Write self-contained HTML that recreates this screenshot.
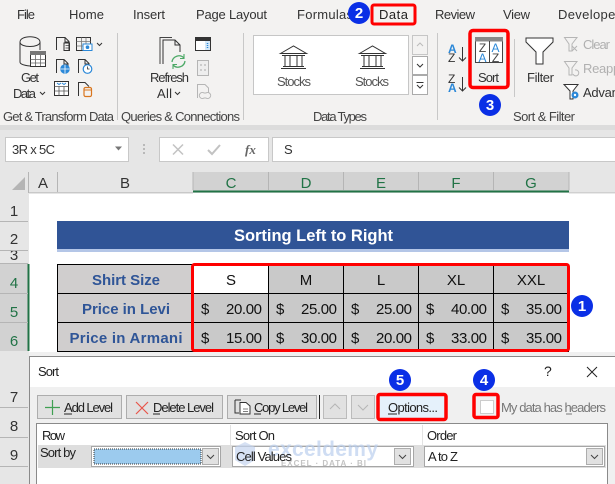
<!DOCTYPE html>
<html><head><meta charset="utf-8"><style>
html,body{margin:0;padding:0;background:#fff;width:615px;height:484px;overflow:hidden}
svg{display:block}
text{font-family:"Liberation Sans",sans-serif;fill:#333;font-size:13px}
.h{font-size:15px;fill:#333;text-anchor:middle}
.b{font-size:15px;font-weight:bold;fill:#2f5597;text-anchor:middle}
.c{font-size:15px;fill:#111}
.cm{font-size:15px;fill:#111;text-anchor:middle}
.d{font-size:13px;fill:#222}
.n{font-weight:bold;font-size:15px;fill:#fff;text-anchor:middle}
.l{fill:none;stroke:#333;stroke-width:1}
</style></head><body>
<svg width="615" height="484" viewBox="0 0 615 484" xmlns="http://www.w3.org/2000/svg">
<!-- ribbon -->
<rect width="615" height="126" fill="#f3f2f1"/>
<rect y="125" width="615" height="5" fill="#dcdcdc"/>
<rect y="130" width="615" height="63" fill="#e6e6e6"/>
<text x="17" y="19" textLength="18">File</text>
<text x="69" y="19" textLength="35">Home</text>
<text x="133" y="19" textLength="32">Insert</text>
<text x="196" y="19" textLength="71">Page Layout</text>
<text x="297" y="19" textLength="56">Formulas</text>
<text x="379" y="19" textLength="29" style="fill:#222">Data</text>
<text x="435" y="19" textLength="40">Review</text>
<text x="503" y="19" textLength="27">View</text>
<text x="558" y="19" textLength="62">Developer</text>
<rect x="372" y="5" width="43" height="19" rx="2" fill="none" stroke="#f00" stroke-width="3"/>
<path d="M117.500 33V120M243.500 33V120M437.500 33V120M514.500 39V97" stroke="#c8c8c8"/>

<!-- get data icons -->
<path d="M20 42V62Q20 65 30 66M40 50V42M20 42C20 35 40 35 40 42C40 48 20 48 20 42Z" class="l" fill="#fff"/>
<rect x="30.500" y="51.500" width="15" height="15" fill="#fff" stroke="#333"/>
<rect x="30" y="51" width="16" height="4" fill="#777"/>
<path d="M30.500 59.500H45.500M30.500 63H45.500M35.500 55V66M40.500 55V66" stroke="#666" stroke-width=".8"/>
<text x="21" y="82" textLength="18">Get</text>
<text x="13" y="98" textLength="23">Data</text>
<path d="M40 92l2.500 2.500 2.500-2.500" class="l"/>
<path d="M56.500 50V37.500H65l4 4V50" class="l"/><path d="M65 37.500V42h4" class="l"/><rect x="64" y="43" width="5.500" height="7.500" class="l" fill="#f3f2f1"/><path d="M65.500 45.500h3M65.500 48h3" stroke="#444" stroke-width=".7"/>
<rect x="76.500" y="37.500" width="14" height="13" class="l"/><path d="M76.500 41.500H90.500M76.500 46H90.500M81.500 37.500V50M86 37.500V50" stroke="#777" stroke-width=".8"/>
<rect x="83" y="44" width="9" height="6.500" fill="#fff" stroke="#2b88d8"/><circle cx="87.500" cy="47.200" r="1.800" fill="#2b88d8"/>
<path d="M97 43l2.500 2.500 2.500-2.500" class="l"/>
<path d="M56.500 73V59.500H64l4 4V67" class="l"/><path d="M64 59.500V64h4" class="l"/>
<circle cx="65" cy="69" r="4.800" fill="#2b88d8"/><path d="M60.500 69h9M65 64.500v9" stroke="#fff" stroke-width=".8"/>
<path d="M78.500 73V59.500H85l4 4V66" class="l"/><path d="M85 59.500V64h4" class="l"/>
<circle cx="87.500" cy="69" r="4.300" fill="#fff" stroke="#2b88d8" stroke-width="1.200"/><path d="M87.500 66.500V69h2" stroke="#333" fill="none" stroke-width=".8"/>
<rect x="54.500" y="81.500" width="14" height="14" fill="#fff" stroke="#333"/><path d="M54.500 86.500H68.500M54.500 91H68.500M59 86.500V95.500M64 86.500V95.500" stroke="#555" stroke-width=".8"/><path d="M57 83l2 1.500 2-1.500M62 83l2 1.500 2-1.500" stroke="#2b88d8" fill="none"/>
<path d="M78.500 96V82.500H85l4 4" class="l"/><rect x="84" y="87.500" width="7.500" height="9" rx="1.500" fill="#f3f2f1" stroke="#d9761e" stroke-width="1.200"/><path d="M84 90h7.500" stroke="#d9761e"/>

<!-- queries -->
<path d="M160 64V37.500H172" fill="none" stroke="#444"/>
<path d="M163 64V40H175l5 5V52" fill="none" stroke="#333"/><path d="M175 40v5h5" class="l"/>
<path d="M172 62a7 7 0 0 1 12-4M185 61a7 7 0 0 1-12 4" fill="none" stroke="#4ca966" stroke-width="1.300"/>
<path d="M184 54v4.500h-4M173 69v-4.500h4" fill="none" stroke="#4ca966" stroke-width="1.100"/>
<text x="150" y="82" textLength="39">Refresh</text>
<text x="157" y="98" textLength="15">All</text>
<path d="M175 92l2.500 2.500 2.500-2.500" class="l"/>
<rect x="195.500" y="37.500" width="15" height="13" fill="#fff" stroke="#333"/><rect x="196" y="38" width="14" height="3" fill="#333"/><rect x="205" y="41" width="5" height="9" fill="#d5e8f8"/><path d="M207.500 43v5" stroke="#2b88d8" stroke-dasharray="1 1" stroke-width="1.500"/>
<rect x="197.500" y="60.500" width="11" height="15" fill="#eee" stroke="#b5b5b5"/><path d="M200 65h2M204 65h2M200 70h2M204 70h2" stroke="#aaa"/>
<path d="M197.500 98V84.500H205l3.500 3.500V93" fill="none" stroke="#b5b5b5"/><path d="M204 93a3 3 0 1 0 0 5h2a3 3 0 1 0 0-5z" fill="none" stroke="#b5b5b5"/>
<text x="3" y="121" textLength="111" style="fill:#444">Get &amp; Transform Data</text>
<text x="121" y="121" textLength="119" style="fill:#444">Queries &amp; Connections</text>

<!-- data types -->
<rect x="253.500" y="35.500" width="155" height="59" fill="#fff" stroke="#c6c6c6"/>
<g fill="none" stroke="#333" stroke-width="1"><path d="M280.500 53.500L293.500 46L306.500 53.500Z"/><path d="M281 68.500H306M283 66.500H304M285 56V66M290 56V66M297 56V66M302 56V66M282 55.500H305"/></g>
<g fill="none" stroke="#333" stroke-width="1" transform="translate(79 0)"><path d="M280.500 53.500L293.500 46L306.500 53.500Z"/><path d="M281 68.500H306M283 66.500H304M285 56V66M290 56V66M297 56V66M302 56V66M282 55.500H305"/></g>
<text x="277" y="86" textLength="34" style="fill:#555">Stocks</text>
<text x="355" y="86" textLength="34" style="fill:#555">Stocks</text>
<rect x="412.500" y="35.500" width="15" height="19" fill="#f3f2f1" stroke="#c6c6c6"/>
<rect x="412.500" y="56.500" width="15" height="18" fill="#fff" stroke="#aaa"/>
<rect x="412.500" y="75.500" width="15" height="19" fill="#fff" stroke="#aaa"/>
<path d="M417 46l3-3 3 3" fill="none" stroke="#bbb"/><path d="M417 64l3 3 3-3" fill="none" stroke="#333"/><path d="M416.500 82.500h7M417 85l3 3 3-3" fill="none" stroke="#333"/>
<text x="313" y="121" textLength="54" style="fill:#444">Data Types</text>

<!-- sort -->
<text x="448" y="53" style="font-size:12px;font-weight:bold;fill:#2b88d8">A</text>
<text x="448" y="62" style="font-size:12px;fill:#333">Z</text>
<path d="M462.500 47V61M459 57.500l3.500 3.500 3.500-3.500" class="l"/>
<text x="448" y="83" style="font-size:12px;fill:#333">Z</text>
<text x="448" y="92" style="font-size:12px;font-weight:bold;fill:#2b88d8">A</text>
<path d="M462.500 77V91M459 87.500l3.500 3.500 3.500-3.500" class="l"/>
<rect x="470" y="30.500" width="38" height="57" rx="3" fill="none" stroke="#f00" stroke-width="3.500"/>
<rect x="475.500" y="37.500" width="27" height="25" fill="#fff" stroke="#444"/>
<rect x="475" y="37" width="28" height="4.500" fill="#888"/>
<path d="M489.500 41V62" stroke="#444"/>
<text x="482.500" y="52" text-anchor="middle" style="font-size:12px;fill:#444">Z</text>
<text x="482.500" y="62" text-anchor="middle" style="font-size:12px;fill:#2b88d8">A</text>
<text x="495.500" y="52" text-anchor="middle" style="font-size:12px;fill:#2b88d8">A</text>
<text x="495.500" y="62" text-anchor="middle" style="font-size:12px;fill:#444">Z</text>
<text x="478" y="82" textLength="21">Sort</text>
<path d="M526 38H553V42L543 52V64H536V52L526 42Z" fill="#fff" stroke="#333"/>
<text x="527" y="82" textLength="27">Filter</text>
<path d="M564.500 37.500H577L572 44V51H569V44Z" fill="none" stroke="#b5b5b5"/><path d="M572 46l5 5M577 46l-5 5" stroke="#b5b5b5"/>
<text x="583" y="49" textLength="27" style="fill:#b0b0b0">Clear</text>
<path d="M564.500 61.500H577L572 68V75H569V68Z" fill="none" stroke="#b5b5b5"/><path d="M575 70a3 3 0 1 1-2 4" fill="none" stroke="#b5b5b5"/>
<text x="583" y="73" textLength="46" style="fill:#b0b0b0">Reapply</text>
<path d="M564 84.500H578L573 91V99H570V91Z" fill="#fff" stroke="#333"/><circle cx="575" cy="95" r="3.500" fill="#2b88d8"/><circle cx="575" cy="95" r="1.200" fill="#fff"/>
<text x="583" y="97" textLength="56">Advanced</text>
<text x="513" y="121" textLength="62" style="fill:#444">Sort &amp; Filter</text>

<!-- formula bar -->
<rect x="5.500" y="137.500" width="123" height="24" fill="#fff" stroke="#c8c8c8"/>
<text x="12" y="154" textLength="43">3R x 5C</text>
<path d="M115 146.500h7l-3.500 4z" fill="#777"/>
<path d="M144 144v2M144 148v2M144 152v2" stroke="#aaa" stroke-width="1.500"/>
<rect x="159.500" y="137.500" width="109" height="24" fill="#fff" stroke="#c8c8c8"/>
<path d="M173 144.500l10 10M183 144.500l-10 10" stroke="#c2c2c2" stroke-width="1.500"/>
<path d="M208 150l4 4 8-9" fill="none" stroke="#c2c2c2" stroke-width="2"/>
<text x="245" y="154" style="font-family:'Liberation Serif',serif;font-style:italic;font-weight:bold;font-size:13px;fill:#666">fx</text>
<rect x="272.500" y="137.500" width="343" height="24" fill="#fff" stroke="#c8c8c8"/>
<text x="284" y="154">S</text>

<!-- headers -->
<rect y="193" width="615" height="291" fill="#fff"/>
<rect x="193" y="172" width="376" height="20" fill="#d2d2d2"/>
<rect x="193" y="190.500" width="376" height="2" fill="#217346"/>
<rect y="192.500" x="29" width="164" height=".8" fill="#aaa"/>
<rect y="192.500" x="569" width="46" height=".8" fill="#bbb"/>
<path d="M25 177V190H12Z" fill="#b5b5b5"/>
<path d="M28.500 172V193M57.500 172V192M193 172V190M268.500 172V190M343.500 172V190M418.500 172V190M493.500 172V190M569 172V190" stroke="#b5b5b5"/>
<text class="h" x="43" y="188">A</text>
<text class="h" x="125" y="188">B</text>
<text class="h" x="231" y="188" style="fill:#217346">C</text>
<text class="h" x="306" y="188" style="fill:#217346">D</text>
<text class="h" x="381" y="188" style="fill:#217346">E</text>
<text class="h" x="456" y="188" style="fill:#217346">F</text>
<text class="h" x="531" y="188" style="fill:#217346">G</text>
<!-- row headers -->
<rect x="0" y="193" width="29" height="291" fill="#e6e6e6"/>
<rect x="0" y="264" width="28" height="87" fill="#d2d2d2"/>
<rect x="27.500" y="264" width="2" height="87" fill="#217346"/>
<path d="M0 221.500H28M0 250.500H28M0 263.500H28M0 293.500H28M0 322.500H28M0 407.500H28M0 437.500H28M0 466.500H28" stroke="#b5b5b5"/>
<text class="h" x="14" y="216">1</text>
<text class="h" x="14" y="244">2</text>
<clipPath id="c3"><rect x="0" y="251" width="28" height="12"/></clipPath>
<text class="h" x="14" y="260" clip-path="url(#c3)">3</text>
<text class="h" x="14" y="288" style="fill:#217346">4</text>
<text class="h" x="14" y="317" style="fill:#217346">5</text>
<text class="h" x="14" y="346" style="fill:#217346">6</text>
<text class="h" x="14" y="402">7</text>
<text class="h" x="14" y="431">8</text>
<text class="h" x="14" y="460">9</text>

<!-- title -->
<rect x="57" y="221" width="512" height="28" fill="#305496"/>
<rect x="57" y="249" width="512" height="3" fill="#b4c6e7"/>
<text x="234" y="241" textLength="159" style="font-size:16.500px;font-weight:bold;fill:#fff">Sorting Left to Right</text>

<!-- table -->
<rect x="57.500" y="264.500" width="511" height="87" fill="#c9c9c9"/>
<rect x="58" y="265" width="135" height="86" fill="#d0cece"/>
<rect x="194" y="265" width="74" height="28" fill="#fff"/>
<path d="M57.500 264.500H568.500V351.500H57.500ZM57.500 293.500H568.500M57.500 322.500H568.500M193.500 264.500V351.500M268.500 264.500V351.500M343.500 264.500V351.500M418.500 264.500V351.500M493.500 264.500V351.500" fill="none" stroke="#000"/>
<text class="b" x="126" y="285" textLength="68">Shirt Size</text>
<text class="b" x="126" y="314" textLength="88">Price in Levi</text>
<text class="b" x="126" y="343" textLength="113">Price in Armani</text>
<g>
<text class="cm" x="231" y="285">S</text><text class="cm" x="306" y="285">M</text><text class="cm" x="381" y="285">L</text><text class="cm" x="456" y="285">XL</text><text class="cm" x="531" y="285">XXL</text>
<text class="c" x="201" y="314">$</text><text class="c" x="226" y="314" textLength="36">20.00</text>
<text class="c" x="276" y="314">$</text><text class="c" x="301" y="314" textLength="36">25.00</text>
<text class="c" x="351" y="314">$</text><text class="c" x="376" y="314" textLength="36">25.00</text>
<text class="c" x="426" y="314">$</text><text class="c" x="451" y="314" textLength="36">40.00</text>
<text class="c" x="501" y="314">$</text><text class="c" x="526" y="314" textLength="36">35.00</text>
<text class="c" x="201" y="343">$</text><text class="c" x="226" y="343" textLength="36">15.00</text>
<text class="c" x="276" y="343">$</text><text class="c" x="301" y="343" textLength="36">30.00</text>
<text class="c" x="351" y="343">$</text><text class="c" x="376" y="343" textLength="36">20.00</text>
<text class="c" x="426" y="343">$</text><text class="c" x="451" y="343" textLength="36">33.00</text>
<text class="c" x="501" y="343">$</text><text class="c" x="526" y="343" textLength="36">35.00</text>
</g>
<rect x="192.500" y="264.500" width="376" height="86" rx="2" fill="none" stroke="#f00" stroke-width="3"/>
<rect x="29" y="352" width="586" height="4" fill="#f0f0f0"/>

<!-- dialog -->
<rect x="29.500" y="356.500" width="586" height="128" fill="#fff" stroke="#8a8a8a"/>
<rect x="30" y="387" width="585" height="97" fill="#f0f0f0"/>
<text x="38" y="376" textLength="21" class="d">Sort</text>
<text x="544" y="376" style="font-size:14px;fill:#222">?</text>
<path d="M587 367l10 10M597 367l-10 10" stroke="#222" stroke-width="1"/>

<rect x="37.500" y="395.500" width="84" height="23" fill="#e1e1e1" stroke="#adadad"/>
<path d="M45 407.500H60M52.500 400V415" stroke="#3fa052" stroke-width="1.200"/>
<text class="d" x="64" y="412" textLength="49">Add Level</text><path d="M64 414h8" stroke="#222"/>
<rect x="126.500" y="395.500" width="96" height="23" fill="#e1e1e1" stroke="#adadad"/>
<path d="M136 402l12 12M148 402l-12 12" stroke="#e8544a" stroke-width="1.200"/>
<text class="d" x="153" y="412" textLength="61">Delete Level</text><path d="M153 414h7" stroke="#222"/>
<rect x="227.500" y="395.500" width="89" height="23" fill="#e1e1e1" stroke="#adadad"/>
<path d="M235 400H241M235 400V413H239" fill="none" stroke="#333"/><path d="M240 402.500H246L250 406V414H240Z" fill="#fff" stroke="#333"/><path d="M243 409h5M243 411.500h5" stroke="#555" stroke-width=".8"/>
<text class="d" x="254" y="412" textLength="54">Copy Level</text><path d="M254 414h7" stroke="#222"/>
<path d="M319.500 395V419" stroke="#222"/>
<rect x="323.500" y="395.500" width="23" height="23" fill="#e1e1e1" stroke="#bbb"/><path d="M330 409l5-5 5 5" fill="none" stroke="#b5b5b5"/>
<rect x="351.500" y="395.500" width="23" height="23" fill="#e1e1e1" stroke="#bbb"/><path d="M358 405l5 5 5-5" fill="none" stroke="#b5b5b5"/>
<rect x="378" y="395" width="67" height="24" fill="#e5f1fb"/>
<text class="d" x="388" y="412" textLength="50">Options...</text><path d="M388 414h9" stroke="#222"/>
<rect x="378" y="394.500" width="68" height="25" rx="2" fill="none" stroke="#f00" stroke-width="3.500"/>
<rect x="480.500" y="400.500" width="13" height="13" fill="#fff" stroke="#ccc"/>
<rect x="474" y="394.500" width="24" height="23" rx="2" fill="none" stroke="#f00" stroke-width="3.500"/>
<text x="501" y="412" textLength="105" style="font-size:13px;fill:#777">My data has headers</text><path d="M566 414h6" stroke="#777"/>

<rect x="36.500" y="423.500" width="571" height="61" fill="#fff" stroke="#8a8a8a"/>
<path d="M230.500 425V445M422.500 425V445" stroke="#e3e3e3"/>
<text class="d" x="42" y="440" textLength="23">Row</text>
<text class="d" x="235" y="440" textLength="40">Sort On</text>
<text class="d" x="427" y="440" textLength="30">Order</text>
<rect x="38" y="445" width="568" height="23" fill="#dedede"/>
<text class="d" x="40" y="457" textLength="36">Sort by</text>
<rect x="91.500" y="446.500" width="129" height="20" fill="#fff" stroke="#a6a6a6"/>
<rect x="94" y="449" width="107" height="15" fill="#9ccbee" stroke="#333" stroke-dasharray="1 1"/>
<rect x="202.500" y="448.500" width="16" height="16" fill="#e1e1e1" stroke="#adadad"/>
<path d="M207 455l3.500 3.500 3.500-3.500" fill="none" stroke="#444"/>
<rect x="232.500" y="446.500" width="181" height="20" fill="#fff" stroke="#a6a6a6"/>
<rect x="394.500" y="448.500" width="16" height="16" fill="#e1e1e1" stroke="#adadad"/>
<path d="M399 455l3.500 3.500 3.500-3.500" fill="none" stroke="#444"/>
<rect x="424.500" y="446.500" width="180" height="20" fill="#fff" stroke="#a6a6a6"/>
<text class="d" x="428" y="461" textLength="30">A to Z</text>
<rect x="586.500" y="448.500" width="16" height="16" fill="#e1e1e1" stroke="#adadad"/>
<path d="M591 455l3.500 3.500 3.500-3.500" fill="none" stroke="#444"/>

<!-- watermark -->
<g opacity=".7">
<path d="M245 442l10 5v13l-10 6-10-6v-13z" fill="#c5d4ef"/>
<text x="268" y="456" textLength="110" style="font-size:21px;font-weight:bold;fill:#bcd0ee">exceldemy</text>
<text x="281" y="466" textLength="85" style="font-size:8px;font-weight:bold;fill:#aaa">EXCEL · DATA · BI</text>
</g>
<text class="d" x="236" y="461" textLength="56">Cell Values</text>

<!-- badges -->
<g>
<circle cx="359" cy="13" r="11" fill="#0a2fe6"/><text class="n" x="359" y="18">2</text>
<circle cx="490" cy="105" r="11" fill="#0a2fe6"/><text class="n" x="490" y="110">3</text>
<circle cx="582" cy="306" r="11" fill="#0a2fe6"/><text class="n" x="582" y="311">1</text>
<circle cx="400" cy="380" r="11" fill="#0a2fe6"/><text class="n" x="400" y="385">5</text>
<circle cx="484" cy="380" r="11" fill="#0a2fe6"/><text class="n" x="484" y="385">4</text>
</g>
</svg>
</body></html>
